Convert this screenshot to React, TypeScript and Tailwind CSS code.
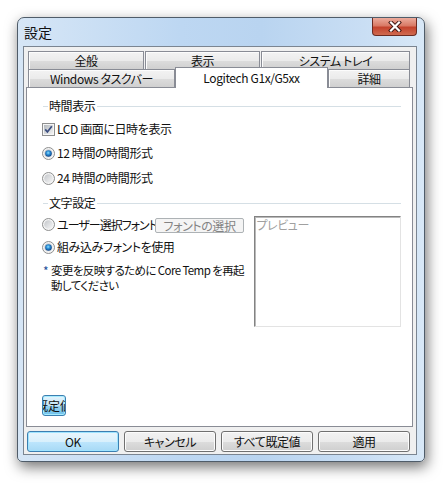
import React from 'react';

// Win7 style settings dialog
const CheckBox = () => (
  <svg width="13" height="13" viewBox="0 0 13 13" className="shrink-0">
    <defs>
      <linearGradient id="cbg" x1="0" y1="0" x2="1" y2="1">
        <stop offset="0" stopColor="#b3b8bd" />
        <stop offset="1" stopColor="#f4f4f4" />
      </linearGradient>
    </defs>
    <rect x="0.5" y="0.5" width="12" height="12" fill="#f6f6f6" stroke="#8e8f8f" />
    <rect x="2" y="2" width="9" height="9" fill="url(#cbg)" />
    <path d="M3.2 6.4 L5.4 8.9 L9.8 3.2" fill="none" stroke="#3b4e80" strokeWidth="1.7" />
  </svg>
);

const Radio = ({ checked }: { checked?: boolean }) => (
  <svg width="13" height="13" viewBox="0 0 13 13" className="shrink-0">
    <defs>
      <linearGradient id="rbg" x1="0" y1="0" x2="1" y2="1">
        <stop offset="0" stopColor="#c3c6ca" />
        <stop offset="1" stopColor="#f6f6f6" />
      </linearGradient>
      <radialGradient id="rdot" cx="0.45" cy="0.4" r="0.6">
        <stop offset="0" stopColor="#8fe0ff" />
        <stop offset="0.45" stopColor="#2c8fd6" />
        <stop offset="1" stopColor="#0c3f82" />
      </radialGradient>
    </defs>
    <circle cx="6.5" cy="6.5" r="6" fill="#f4f4f4" stroke="#8e8f8f" />
    <circle cx="6.5" cy="6.5" r="4.3" fill="url(#rbg)" />
    {checked && <circle cx="6.5" cy="6.5" r="3.3" fill="url(#rdot)" />}
  </svg>
);

const GroupHeader = ({ label }: { label: string }) => (
  <div className="ml-px flex h-[16px] items-center">
    <div className="h-px w-[5px] bg-[#d5dfe5]" />
    <span className="ml-px mr-[2px] leading-none">{label}</span>
    <div className="h-px flex-1 bg-[#d5dfe5]" />
  </div>
);

const Tab = ({ w, children }: { w: string; children: React.ReactNode }) => (
  <div
    className={`${w} flex items-center justify-center border border-b-0 border-[#898c95] bg-[linear-gradient(180deg,#f3f3f3_0%,#ebebeb_50%,#dddddd_50%,#d0d0d0_100%)] leading-none shadow-[inset_1px_1px_0_#fcfcfc]`}
  >
    {children}
  </div>
);

const Btn = ({ primary, children }: { primary?: boolean; children: React.ReactNode }) =>
  primary ? (
    <div className="flex h-[21px] w-[92px] items-center justify-center rounded-[3px] border border-[#3c7fb1] bg-[linear-gradient(180deg,#eaf6fd_0%,#d9f0fc_50%,#bee6fd_50%,#a7d9f5_100%)] leading-none shadow-[inset_0_0_0_1px_#9fe4ff]">
      {children}
    </div>
  ) : (
    <div className="flex h-[21px] w-[92px] items-center justify-center rounded-[3px] border border-[#707070] bg-[linear-gradient(180deg,#f2f2f2_0%,#ebebeb_50%,#dddddd_50%,#cfcfcf_100%)] leading-none shadow-[inset_0_0_0_1px_#fcfcfc]">
      {children}
    </div>
  );

export default function App() {
  return (
    <div className="h-[485px] w-[445px] bg-white pl-[17px] pt-[17px] font-['Noto_Sans_CJK_JP','Noto_Sans',sans-serif] text-[12px] tracking-[-0.4px] text-[#111] [font-feature-settings:'palt']">
      <div className="flex h-[445px] w-[408px] flex-col rounded-t-[7px] rounded-b-[5px] border border-[#4f5c69] bg-[linear-gradient(90deg,#d6e6f6_0%,#bdd7f2_40%,#b9d4f0_60%,#c9def4_85%,#d8e8f7_100%)] shadow-[2px_5px_14px_rgba(0,0,0,0.55)]">
        {/* title bar */}
        <div className="flex h-[28px] items-start justify-between">
          <span className="pl-[6px] pt-[6px] text-[14px] leading-[16px] tracking-normal">設定</span>
          <div className="mr-[7px] flex h-[18px] w-[45px] items-center justify-center rounded-b-[4px] border border-t-0 border-[#6b2b22] bg-[linear-gradient(180deg,#ecab9c_0%,#d97a66_45%,#c4432d_55%,#cf6a50_100%)]">
            <svg width="14" height="11" viewBox="0 0 14 11">
              <path d="M3 1.5 L11 9.5 M11 1.5 L3 9.5" stroke="#3d1410" strokeWidth="4" strokeLinecap="square" />
              <path d="M3 1.5 L11 9.5 M11 1.5 L3 9.5" stroke="#ffffff" strokeWidth="2.2" strokeLinecap="square" />
            </svg>
          </div>
        </div>

        {/* client area */}
        <div className="ml-[5px] flex h-[409px] w-[394px] flex-col border border-[#7b8591] bg-[#f0f0f0] px-[2px] pt-[4px]">
          <div className="ml-[2px] flex h-[18px] gap-px">
            <Tab w="w-[116px]">全般</Tab>
            <Tab w="w-[115px]">表示</Tab>
            <Tab w="w-[149px]">システム トレイ</Tab>
          </div>
          <div className="ml-[2px] flex h-[18px] items-start">
            <Tab w="w-[147px] h-[18px] pt-px">Windows タスクバー</Tab>
            <div className="relative z-10 -mt-[2px] flex h-[21px] w-[153px] items-center justify-center border border-b-0 border-[#898c95] bg-white leading-none">
              Logitech G1x/G5xx
            </div>
            <Tab w="w-[82px] h-[18px] pt-px">詳細</Tab>
          </div>

          {/* tab panel */}
          <div className="flex h-[340px] w-[387px] flex-col border border-[#898c95] bg-white pb-[10px] pl-[15px] pr-[11px] pt-[10px]">
            <GroupHeader label="時間表示" />
            <div className="mt-[7px] flex h-[16px] items-center">
              <CheckBox />
              <span className="ml-[2px] leading-none">LCD 画面に日時を表示</span>
            </div>
            <div className="mt-[8px] flex h-[16px] items-center">
              <Radio checked />
              <span className="ml-[2px] leading-none">12 時間の時間形式</span>
            </div>
            <div className="mt-[9px] flex h-[16px] items-center">
              <Radio />
              <span className="ml-[2px] leading-none">24 時間の時間形式</span>
            </div>
            <div className="mt-[9px]">
              <GroupHeader label="文字設定" />
            </div>

            <div className="mt-[5px] flex">
              <div className="flex w-[213px] flex-col">
                <div className="flex h-[17px] items-center">
                  <Radio />
                  <span className="ml-[2px] w-[98px] whitespace-nowrap leading-none tracking-[-1px]">ユーザー選択フォント</span>
                  <div className="mt-[2px] flex h-[15px] w-[89px] items-center justify-center rounded-[2px] border border-[#adb2b5] bg-[#f4f4f4] leading-none text-[#838383]">
                    フォントの選択
                  </div>
                </div>
                <div className="mt-[6px] flex h-[16px] items-center">
                  <Radio checked />
                  <span className="ml-[2px] leading-none">組み込みフォントを使用</span>
                </div>
                <div className="ml-px mt-[8px] flex leading-[15px]">
                  <span className="w-[8px] shrink-0 text-[#1d4f9a]">*</span>
                  <span className="whitespace-nowrap text-[11.5px] tracking-[-0.6px]">
                    変更を反映するために Core Temp を再起
                    <br />
                    動してください
                  </span>
                </div>
              </div>
              <div className="h-[111px] w-[147px] border border-b-[#e3e3e3] border-l-[#838383] border-r-[#e3e3e3] border-t-[#838383] pl-px pt-px leading-[14px] text-[#a0a0a0] shadow-[inset_1px_1px_0_#b9b9b9]">
                プレビュー
              </div>
            </div>

            <div className="flex-1" />
            <div className="flex h-[21px] w-[24px] items-center justify-center overflow-hidden rounded-[3px] border border-[#3c7fb1] bg-[linear-gradient(180deg,#e5f4fc_0%,#c4e5f6_50%,#98d1ef_50%,#6ec2ec_100%)] leading-none shadow-[inset_0_0_0_1px_#a6ecff]">
              <span className="shrink-0 whitespace-nowrap tracking-normal">既定値</span>
            </div>
          </div>

          {/* dialog buttons */}
          <div className="ml-px mt-[4px] flex gap-[5px]">
            <Btn primary>OK</Btn>
            <Btn>キャンセル</Btn>
            <Btn>すべて既定値</Btn>
            <Btn>適用</Btn>
          </div>
        </div>
      </div>
    </div>
  );
}
